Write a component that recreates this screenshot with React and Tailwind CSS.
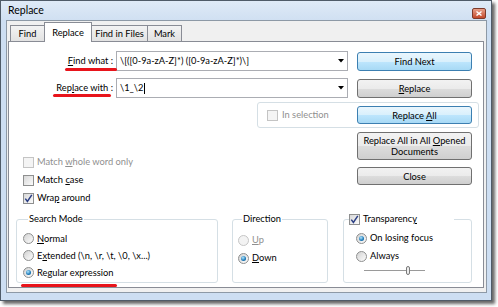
import React from "react";

function Btn({ children, primary, className }) {
  return (
    <div
      className={`flex items-center justify-center rounded-[3px] border text-center leading-[11px] ${
        primary
          ? "border-[#3c7fb1] bg-[linear-gradient(#eaf6fd_0%,#d9f0fc_50%,#bee6fd_50%,#a7d9f5_100%)]"
          : "border-[#707070] bg-[linear-gradient(#f2f2f2_0%,#ebebeb_50%,#dddddd_50%,#cfcfcf_100%)]"
      } ${className}`}
    >
      {children}
    </div>
  );
}

function Check({ checked, disabled }) {
  return (
    <span
      className={`flex h-[11px] w-[11px] shrink-0 items-center justify-center border ${
        disabled
          ? "border-[#c4c4c4] bg-[#f4f4f4]"
          : "border-[#8e8f8f] bg-[linear-gradient(135deg,#d8d8d8,#fbfbfb)]"
      }`}
    >
      {checked && (
        <svg width="9" height="9" viewBox="0 0 9 9">
          <path d="M1.3 4.6 L3.4 7.4 L7.8 0.8" fill="none" stroke="#2c3f84" strokeWidth="1.5" />
        </svg>
      )}
    </span>
  );
}

function Radio({ checked, disabled }) {
  return (
    <span
      className={`flex h-[11px] w-[11px] shrink-0 items-center justify-center rounded-full border ${
        disabled
          ? "border-[#c6c6c6] bg-[#f3f3f3]"
          : "border-[#8e8f8f] bg-[linear-gradient(135deg,#d2d2d2,#fdfdfd)]"
      }`}
    >
      {checked && (
        <span className="h-[5px] w-[5px] rounded-full bg-[radial-gradient(circle_at_40%_35%,#b5e8ff,#1a78b8_60%,#0d4e7d)]" />
      )}
    </span>
  );
}

function Arrow() {
  return (
    <svg width="6" height="4" viewBox="0 0 6 4">
      <path d="M0 0 H6 L3 3.5 Z" fill="#000" />
    </svg>
  );
}

export default function App() {
  return (
    <div className="h-[307px] w-[498px] overflow-hidden bg-white font-[Lato,sans-serif] text-[9.3px] text-black">
      <div className="flex h-[301px] w-[492px] flex-col border border-[#4f5b68] bg-[#cddef2] shadow-[3px_3px_3px_rgba(0,0,0,0.6)]">
        {/* Title bar */}
        <div className="flex h-[19px] items-start justify-between bg-[linear-gradient(#dfeaf7,#d0e0f2)] pl-[7px] pr-[5px]">
          <span className="mt-[3px] text-[10.5px] leading-[13px]">Replace</span>
          <div className="mt-[7px] flex h-[11px] w-[14px] items-center justify-center rounded-[2px] border border-[#7d3a2a] bg-[linear-gradient(#e8a08a,#c4492b)]">
            <svg width="6" height="5" viewBox="0 0 6 5">
              <path d="M0.5 0.5 L5.5 4.5 M5.5 0.5 L0.5 4.5" stroke="#fff" strokeWidth="1.4" />
            </svg>
          </div>
        </div>

        {/* Client area */}
        <div className="ml-[5px] flex h-[273px] w-[481px] flex-col border border-[#8d99a6] bg-[#f0f0f0]">
          {/* Tabs */}
          <div className="flex h-[20px] items-end pl-[3px]">
            <div className="flex h-[16px] w-[35px] items-center justify-center border border-b-0 border-[#898c95] bg-[linear-gradient(#f3f3f3,#e2e2e2)]">
              Find
            </div>
            <div className="relative z-10 -mb-px -ml-px flex h-[20px] w-[48px] items-start justify-center border border-b-0 border-[#898c95] bg-white pt-[3px]">
              Replace
            </div>
            <div className="-ml-px flex h-[16px] w-[57px] items-center justify-center border border-b-0 border-[#898c95] bg-[linear-gradient(#f3f3f3,#e2e2e2)]">
              Find in Files
            </div>
            <div className="-ml-px flex h-[16px] w-[35px] items-center justify-center border border-b-0 border-[#898c95] bg-[linear-gradient(#f3f3f3,#e2e2e2)]">
              Mark
            </div>
          </div>

          {/* Panel */}
          <div className="ml-[1px] flex h-[247px] w-[476px] flex-col border border-[#898c95] bg-white">
            {/* Row 1 */}
            <div className="relative mt-[9px] flex h-[20px] items-center">
              <div className="flex w-[104px] justify-end">
                <span>
                  <span className="underline">F</span>ind what :
                </span>
              </div>
              <div className="ml-[3px] flex h-[20px] w-[232px] items-center justify-between border border-[#abadb3] bg-white pl-[3px] pr-[3px]">
                <span>{"\\[([0-9a-zA-Z]*) ([0-9a-zA-Z]*)\\]"}</span>
                <Arrow />
              </div>
              <Btn primary className="ml-[9px] h-[19px] w-[115px]">
                Find Next
              </Btn>
              <div className="absolute left-[56px] top-[17px] z-10 h-[3px] w-[52px] rounded-full bg-[#e8141b]" />
            </div>

            {/* Row 2 */}
            <div className="relative mt-[7px] flex h-[20px] items-center">
              <div className="flex w-[104px] justify-end">
                <span>
                  Rep<span className="underline">l</span>ace with :
                </span>
              </div>
              <div className="ml-[3px] flex h-[20px] w-[232px] items-center justify-between border border-[#abadb3] bg-white pl-[3px] pr-[3px]">
                <span className="flex items-center">
                  <span>{"\\1_\\2"}</span>
                  <span className="ml-[1px] h-[11px] w-px bg-black" />
                </span>
                <Arrow />
              </div>
              <Btn className="ml-[9px] h-[19px] w-[115px]">
                <span>
                  <span className="underline">R</span>eplace
                </span>
              </Btn>
              <div className="absolute left-[44px] top-[16px] z-10 h-[3px] w-[58px] rounded-full bg-[#e8141b]" />
            </div>

            {/* Row 3: In selection group */}
            <div className="ml-[248px] mt-[4px] flex h-[26px] w-[222px] items-center rounded-[3px] border border-[#d5dfe5] pl-[9px] pr-[6px]">
              <Check disabled />
              <span className="ml-[4px] text-[#8f8f8f]">
                In select<span className="underline">i</span>on
              </span>
              <Btn primary className="ml-auto h-[18px] w-[115px]">
                <span>
                  Replace <span className="underline">A</span>ll
                </span>
              </Btn>
            </div>

            {/* Section 4 */}
            <div className="mt-[4px] flex">
              <div className="ml-[14px] flex flex-col pt-[21px]">
                <div className="flex h-[18px] items-center">
                  <Check disabled />
                  <span className="ml-[3px] text-[#8f8f8f]">
                    Match <span className="underline">w</span>hole word only
                  </span>
                </div>
                <div className="flex h-[18px] items-center">
                  <Check />
                  <span className="ml-[3px]">
                    Match <span className="underline">c</span>ase
                  </span>
                </div>
                <div className="flex h-[18px] items-center">
                  <Check checked />
                  <span className="ml-[3px]">
                    Wra<span className="underline">p</span> around
                  </span>
                </div>
              </div>
              <div className="ml-auto mr-[11px] flex flex-col">
                <Btn className="h-[28px] w-[115px]">
                  <span>
                    Replace All in All <span className="underline">O</span>pened
                    <br />
                    Documents
                  </span>
                </Btn>
                <Btn className="mt-[7px] h-[18px] w-[115px]">Close</Btn>
              </div>
            </div>

            {/* Section 5: group boxes */}
            <div className="mt-[6px] flex">
              <fieldset className="relative ml-[7px] h-[70px] w-[202px] rounded-[3px] border border-[#d5dfe5] pl-[6px]">
                <legend className="ml-[5px] px-[1px] leading-[12px]">Search Mode</legend>
                <div className="mt-[5px] flex h-[17px] items-center">
                  <Radio />
                  <span className="ml-[3px]">
                    <span className="underline">N</span>ormal
                  </span>
                </div>
                <div className="flex h-[17px] items-center">
                  <Radio />
                  <span className="ml-[3px]">
                    E<span className="underline">x</span>tended (\n, \r, \t, \0, \x...)
                  </span>
                </div>
                <div className="flex h-[17px] items-center">
                  <Radio checked />
                  <span className="ml-[3px]">
                    Re<span className="underline">g</span>ular expression
                  </span>
                </div>
                <div className="absolute left-[4px] top-[59px] h-[3px] w-[96px] rounded-full bg-[#e8141b]" />
              </fieldset>

              <fieldset className="ml-[14px] h-[70px] w-[96px] rounded-[3px] border border-[#d5dfe5] pl-[5px]">
                <legend className="ml-[4px] px-[1px] leading-[12px]">Direction</legend>
                <div className="mt-[6px] flex h-[18px] items-center">
                  <Radio disabled />
                  <span className="ml-[3px] text-[#8f8f8f]">
                    <span className="underline">U</span>p
                  </span>
                </div>
                <div className="flex h-[18px] items-center">
                  <Radio checked />
                  <span className="ml-[3px]">
                    <span className="underline">D</span>own
                  </span>
                </div>
              </fieldset>

              <fieldset className="ml-[15px] h-[70px] w-[129px] rounded-[3px] border border-[#d5dfe5] pl-[12px]">
                <legend className="-ml-[7px] w-[105px] leading-[12px]">
                  <span className="flex items-center">
                    <Check checked />
                    <span className="ml-[3px]">
                      Transparenc<span className="underline">y</span>
                    </span>
                  </span>
                </legend>
                <div className="mt-[4px] flex h-[18px] items-center">
                  <Radio checked />
                  <span className="ml-[3px]">On losing focus</span>
                </div>
                <div className="flex h-[18px] items-center">
                  <Radio />
                  <span className="ml-[3px]">Always</span>
                </div>
                <div className="ml-[8px] flex h-[11px] w-[61px] items-center">
                  <div className="h-[1px] w-[42px] bg-[#9a9a9a]" />
                  <div className="h-[9px] w-[4px] rounded-[2px] border border-[#7a7a7a] bg-[#eeeeee]" />
                  <div className="h-[1px] flex-1 bg-[#9a9a9a]" />
                </div>
              </fieldset>
            </div>
          </div>
        </div>
      </div>
    </div>
  );
}
